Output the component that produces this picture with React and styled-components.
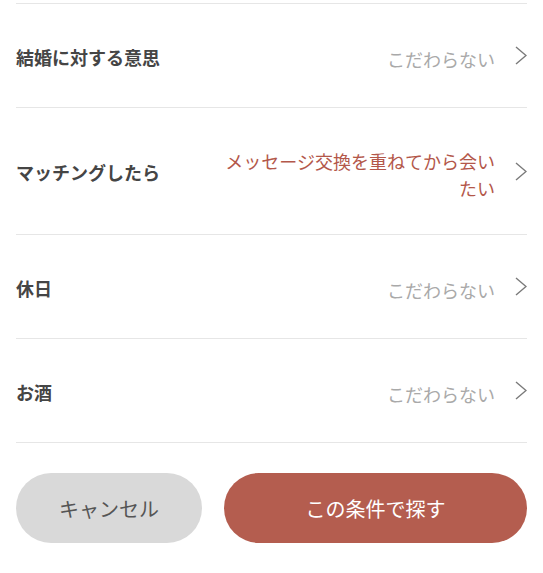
import React from "react"
import styled, { createGlobalStyle } from "styled-components"

const GlobalStyle = createGlobalStyle`
  html, body {
    margin: 0;
    padding: 0;
    background: #fff;
    font-family: "Noto Sans CJK JP", "Noto Sans", sans-serif;
  }
`;

const Page = styled.div`
  width: 543px;
  height: 573px;
  box-sizing: border-box;
  padding: 3px 16px 0 16px;
  overflow: hidden;
`;

const List = styled.div`
  border-bottom: 1px solid #e6e6e6;
`;

const Row = styled.div`
  display: flex;
  align-items: center;
  box-sizing: border-box;
  min-height: 104px;
  padding: 32.5px 0;
  border-top: 1px solid #e6e6e6;
`;

const Label = styled.div`
  flex-shrink: 0;
  font-size: 18px;
  line-height: 26px;
  font-weight: 700;
  color: #454545;
  padding-top: 2px;
`;

const Value = styled.div`
  margin-left: auto;
  max-width: 272px;
  padding-top: 7px;
  text-align: right;
  font-size: 18px;
  line-height: 27px;
  color: ${p => (p.$active ? "#b3574a" : "#a9a9a9")};
`;

const Chevron = styled.svg`
  flex-shrink: 0;
  width: 12px;
  height: 19px;
  margin-left: 20px;
`;

const Buttons = styled.div`
  display: flex;
  gap: 22px;
  padding-top: 30px;
`;

const Button = styled.button`
  height: 70px;
  border: 0;
  border-radius: 35px;
  font-family: inherit;
  font-size: 20px;
  cursor: pointer;
  background: ${p => (p.$primary ? "#b45d4f" : "#d9d9d9")};
  color: ${p => (p.$primary ? "#fff" : "#555")};
  flex: ${p => (p.$primary ? "1" : "0 0 186px")};
`;

const conditions = [
  { label: "結婚に対する意思", value: "こだわらない" },
  { label: "マッチングしたら", value: "メッセージ交換を重ねてから会いたい", active: true },
  { label: "休日", value: "こだわらない" },
  { label: "お酒", value: "こだわらない" },
];

export default function App() {
  return (<>
    <GlobalStyle />
    <Page>
      <List>
        {conditions.map(c => (
          <Row key={c.label}>
            <Label>{c.label}</Label>
            <Value $active={c.active}>{c.value}</Value>
            <Chevron viewBox="0 0 12 19">
              <polyline points="1,1 11,9.5 1,18" fill="none" stroke="#7a7a7a" strokeWidth="1.4" />
            </Chevron>
          </Row>
        ))}
      </List>
      <Buttons>
        <Button>キャンセル</Button>
        <Button $primary>この条件で探す</Button>
      </Buttons>
    </Page>
  </>)
}
